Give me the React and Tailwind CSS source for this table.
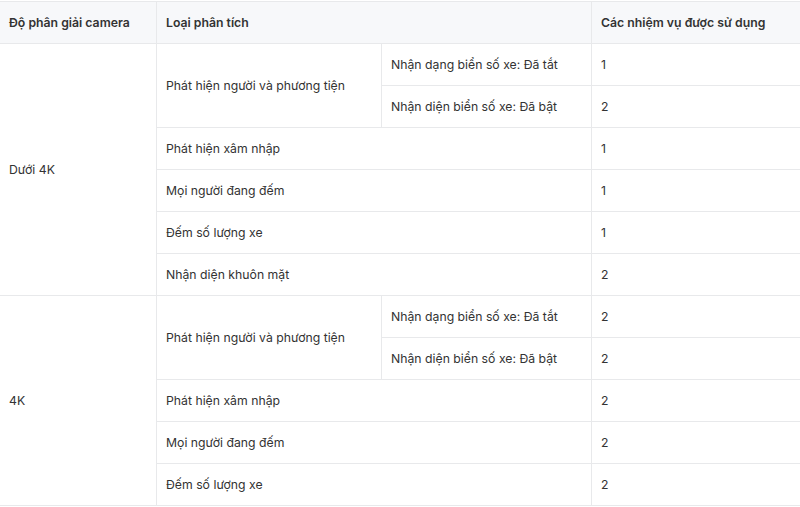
import React from "react";

const rows = [
    { res: "Dưới 4K", groups: [
        { type: "Phát hiện người và phương tiện", subs: [["Nhận dạng biển số xe: Đã tắt", "1"], ["Nhận diện biển số xe: Đã bật", "2"]] },
        { type: "Phát hiện xâm nhập", value: "1" },
        { type: "Mọi người đang đếm", value: "1" },
        { type: "Đếm số lượng xe", value: "1" },
        { type: "Nhận diện khuôn mặt", value: "2" },
    ] },
    { res: "4K", groups: [
        { type: "Phát hiện người và phương tiện", subs: [["Nhận dạng biển số xe: Đã tắt", "2"], ["Nhận diện biển số xe: Đã bật", "2"]] },
        { type: "Phát hiện xâm nhập", value: "2" },
        { type: "Mọi người đang đếm", value: "2" },
        { type: "Đếm số lượng xe", value: "2" },
    ] },
];

const td = "border border-[#e8e9eb] pl-[9px] pr-[9px] pt-[2px] pb-0 h-[42px] align-middle";

export default function App() {
    return (
        <div className="bg-white w-[800px] h-[507px] overflow-hidden pt-px font-['Inter','Liberation_Sans',sans-serif] text-[12.25px] text-[#333]">
            <table className="table-fixed border-collapse w-[802px] -ml-px">
                <colgroup>
                    <col className="w-[157px]" />
                    <col className="w-[225px]" />
                    <col className="w-[210px]" />
                    <col className="w-[210px]" />
                </colgroup>
                <thead>
                    <tr className="bg-[#f7f8fa]">
                        <th className={`${td} text-left font-semibold`}>Độ phân giải camera</th>
                        <th className={`${td} text-left font-semibold`} colSpan={2}>Loại phân tích</th>
                        <th className={`${td} text-left font-semibold`}>Các nhiệm vụ được sử dụng</th>
                    </tr>
                </thead>
                <tbody>
                    {rows.map((r) => {
                        const total = r.groups.reduce((n, g) => n + (g.subs ? g.subs.length : 1), 0);
                        const out = [];
                        r.groups.forEach((g, gi) => {
                            if (g.subs) {
                                g.subs.forEach((s, si) => {
                                    out.push(
                                        <tr key={`${r.res}-${gi}-${si}`}>
                                            {gi === 0 && si === 0 && <td className={td} rowSpan={total}>{r.res}</td>}
                                            {si === 0 && <td className={td} rowSpan={g.subs.length}>{g.type}</td>}
                                            <td className={td}>{s[0]}</td>
                                            <td className={td}>{s[1]}</td>
                                        </tr>
                                    );
                                });
                            } else {
                                out.push(
                                    <tr key={`${r.res}-${gi}`}>
                                        {gi === 0 && <td className={td} rowSpan={total}>{r.res}</td>}
                                        <td className={td} colSpan={2}>{g.type}</td>
                                        <td className={td}>{g.value}</td>
                                    </tr>
                                );
                            }
                        });
                        return out;
                    })}
                </tbody>
            </table>
        </div>
    );
}
